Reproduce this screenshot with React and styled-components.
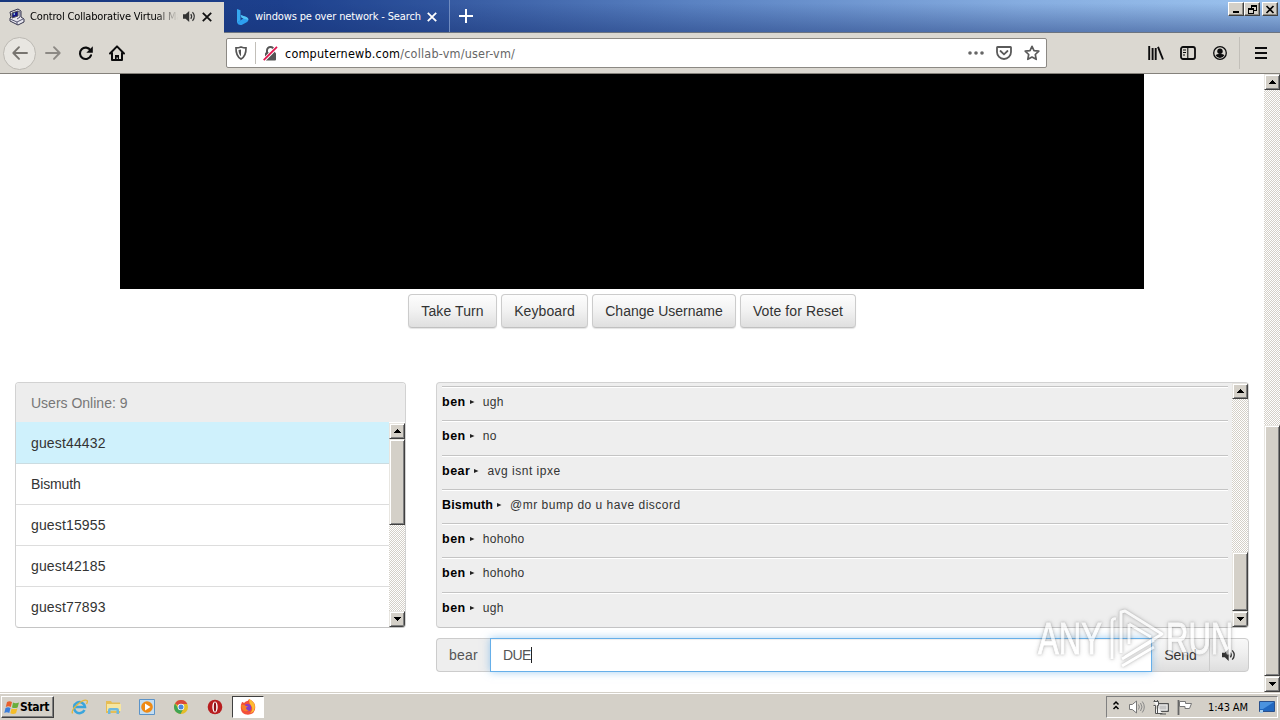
import React from "react";
import styled, { createGlobalStyle, css } from "styled-components";

const Global = createGlobalStyle`
  *{box-sizing:border-box}
  html,body{margin:0;padding:0;overflow:hidden;background:#fff}
  body{font-family:"Liberation Sans",Arial,sans-serif;font-size:14px;color:#333}
`;
const tahoma = css`font-family:"DejaVu Sans Condensed","DejaVu Sans",sans-serif;font-stretch:condensed;`;

const Screen = styled.div`width:1280px;height:720px;display:flex;flex-direction:column;overflow:hidden;position:relative;`;
const TitleBar = styled.header`
  height:33px;flex:none;display:flex;align-items:stretch;
  border-bottom:1px solid #6c7480;
  background:linear-gradient(180deg,rgba(20,45,110,0) 10%,rgba(20,45,110,.42) 100%),linear-gradient(90deg,#17377d 0,#1d3f8b 22%,#5a82c2 54%,#86ade0 80%,#9cc3ee 100%);
`;
const Tab = styled.div`
  width:${p => p.$w}px;flex:none;display:flex;align-items:center;white-space:nowrap;
  ${tahoma} font-size:11px;color:${p => (p.$active ? "#000" : "#fff")};
  ${p => p.$active
    ? "background:#dbd8d1;margin-top:2px;height:32px;padding:0 0 3px 9px;"
    : "padding:2px 0 0 10px;border-right:1px solid #6f8bc0;background:rgba(30,70,150,.2);"}
`;
const TabTitle = styled.span`
  width:${p => p.$w}px;margin-left:${p => p.$ml}px;overflow:hidden;letter-spacing:${p => p.$ls || 0}px;line-height:16px;
  ${p => p.$fade && "-webkit-mask-image:linear-gradient(90deg,#000 85%,transparent 100%);mask-image:linear-gradient(90deg,#000 85%,transparent 100%);"}
`;
const Icon = styled.svg`flex:none;display:block;margin-left:${p => p.$ml || 0}px;margin-top:${p => p.$mt || 0}px;overflow:visible;`;
const WinButtons = styled.div`margin-left:auto;display:flex;padding:2px 2px 0 0;`;
const WinButton = styled.button`
  width:16px;height:14px;padding:0;margin-left:${p => p.$gap || 0}px;background:#d4d0c8;display:flex;align-items:center;justify-content:center;
  border:1px solid;border-color:#fff #404040 #404040 #fff;box-shadow:inset -1px -1px #908d86;
`;
const NavBar = styled.nav`height:41px;flex:none;display:flex;align-items:center;background:#dbd8d1;border-bottom:1px solid #85827c;`;
const BackButton = styled.div`
  width:33px;height:33px;margin-left:3px;border-radius:50%;border:1px solid #bcb9b3;background:#e8e6e1;display:flex;align-items:center;justify-content:center;
`;
const UrlBar = styled.div`
  width:821px;height:30px;margin-left:101px;display:flex;align-items:center;background:#fff;border:1px solid #8c8984;border-radius:2px;
`;
const Divider = styled.i`width:1px;height:${p => p.$h}px;background:#c2bfb9;margin-left:${p => p.$ml}px;`;
const Url = styled.span`${tahoma} font-size:12.5px;color:#666;margin-left:7px;width:675px;white-space:nowrap;letter-spacing:.2px;b{font-weight:400;color:#000;}`;

const Viewport = styled.div`height:618px;flex:none;display:flex;background:#fff;`;
const Page = styled.main`width:1264px;display:flex;flex-direction:column;`;
const Display = styled.div`width:1024px;height:215px;background:#000;margin-left:120px;`;
const Actions = styled.div`display:flex;gap:4px;margin:5px 0 0 408px;height:34px;`;
const Action = styled.button`
  width:${p => p.$w}px;height:34px;padding:0 0 1px;font:14px "Liberation Sans",Arial,sans-serif;letter-spacing:${p => p.$ls || 0}px;color:#333;white-space:nowrap;
  border:1px solid #ccc;border-bottom-color:#c0c0c0;border-radius:4px;background:linear-gradient(#fdfdfd,#f3f3f3 45%,#dfdfdf);box-shadow:0 1px 1px #e4e4e4;
`;
const Columns = styled.div`display:flex;margin:54px 0 0 15px;gap:30px;align-items:flex-start;`;
const Panel = styled.section`
  width:${p => p.$w}px;height:246px;border:1px solid #d2d2d2;border-bottom-color:#c4c4c4;border-radius:4px;overflow:hidden;background:${p => p.$bg || "#fff"};
`;
const PanelHead = styled.div`height:39px;background:#ededed;color:#777;padding-left:15px;line-height:40px;`;
const Split = styled.div`display:flex;height:${p => p.$h}px;`;
const Users = styled.ul`list-style:none;margin:0;padding:0;flex:1;`;
const User = styled.li`
  height:41px;line-height:41px;padding-left:15px;border-bottom:1px solid #ddd;letter-spacing:${p => p.$ls}px;
  ${p => p.$self && "height:42px;line-height:42px;background:#cff1fc;border-color:#cbdce1;"}
`;
const Track = styled.div`
  width:16px;flex:none;display:flex;flex-direction:column;height:${p => (p.$h ? p.$h + "px" : "100%")};margin-top:${p => p.$mt || 0}px;
  background:repeating-conic-gradient(#d4d0c8 0 25%,#fff 0 50%) 0 0/2px 2px;
`;
const Bevel = styled.div`
  width:16px;height:${p => p.$h || 16}px;flex:none;background:#d4d0c8;display:flex;align-items:center;justify-content:center;
  border:1px solid;border-color:#e8e6e1 #404040 #404040 #e8e6e1;box-shadow:inset 1px 1px #fff,inset -1px -1px #808080;
`;
const Gap = styled.div`height:${p => p.$h}px;flex:none;`;
const Messages = styled.div`flex:1;padding:3px 4px 0 5px;`;
const Message = styled.div`
  height:34.25px;border-top:1px solid #c4c4c4;box-shadow:inset 0 1px #fff;padding-top:7px;font-size:12px;line-height:16px;display:flex;white-space:nowrap;
`;
const Nick = styled.b`color:#000;font-size:12.5px;letter-spacing:${p => p.$ls}px;`;
const Said = styled.span`margin-left:8px;letter-spacing:${p => p.$ls}px;`;
const ChatColumn = styled.div`display:flex;flex-direction:column;gap:10px;`;
const InputGroup = styled.div`display:flex;height:34px;width:813px;`;
const Addon = styled.span`
  width:54px;border:1px solid #ccc;border-right:0;border-radius:4px 0 0 4px;background:#eee;color:#555;line-height:32px;padding-left:12px;letter-spacing:.2px;
`;
const Field = styled.div`
  width:662px;border:1px solid #66afe9;background:#fff;color:#555;padding-left:12px;display:flex;align-items:center;position:relative;letter-spacing:-.6px;
  box-shadow:0 0 8px rgba(102,175,233,.6),inset 0 1px 1px rgba(0,0,0,.07);
`;
const Caret = styled.i`width:1px;height:16px;background:#222;`;
const GroupButton = styled.button`
  width:${p => p.$w}px;padding:0;border:1px solid #ccc;border-left:${p => (p.$last ? "1px solid #ccc" : "0")};border-right-width:${p => (p.$last ? 1 : 0)}px;border-radius:${p => (p.$last ? "0 4px 4px 0" : "0")};
  background:linear-gradient(#f8f8f8,#f0f0f0 40%,#dedede);font:14px "Liberation Sans",Arial,sans-serif;color:#333;display:flex;align-items:center;justify-content:center;
`;
const TaskBar = styled.footer`height:28px;flex:none;display:flex;align-items:flex-start;background:#d4d0c8;border-top:1px solid #d4d0c8;box-shadow:inset 0 1px #fff;padding-top:3px;`;
const Start = styled.button`
  width:53px;height:22px;margin-left:1px;padding:0;display:flex;align-items:center;${tahoma} font-size:12px;font-weight:700;letter-spacing:-.35px;color:#000;
  background:#d4d0c8;border:1px solid;border-color:#fff #404040 #404040 #fff;box-shadow:inset -1px -1px #808080;
`;
const Quick = styled.div`display:flex;align-items:center;height:22px;`;
const Running = styled.div`
  width:32px;height:22px;margin-left:9px;background:#fff;display:flex;align-items:center;justify-content:center;border:1px solid;border-color:#404040 #fff #fff #404040;
`;
const Tray = styled.div`width:172px;height:22px;margin:0 2px 0 auto;border:1px solid;border-color:#808080 #fff #fff #808080;display:flex;align-items:center;${tahoma} font-size:11px;color:#000;`;
const Clock = styled.span`width:42px;margin-left:15px;letter-spacing:-.1px;white-space:nowrap;`;
const Watermark = styled.div`
  position:absolute;left:1038px;top:606px;width:196px;height:66px;display:flex;align-items:center;pointer-events:none;opacity:.62;
  font:400 45px "Liberation Sans",Arial,sans-serif;color:#fff;filter:drop-shadow(0 0 1px rgba(90,90,90,.55)) drop-shadow(0 0 2px rgba(110,110,110,.5));
`;
const MarkWord = styled.span`
  width:${p => p.$w}px;flex:none;white-space:nowrap;
  b{display:inline-block;font-weight:400;-webkit-text-stroke:1px #fff;transform-origin:0 50%;transform:scaleX(.69);}
`;

const Arrow = ({ down }) => (
  <Icon width="7" height="4" viewBox="0 0 7 4" shapeRendering="crispEdges"><path d={down ? "M0 0h7L3.5 4z" : "M3.5 0L7 4H0z"} fill="#000" /></Icon>
);
const ScrollBar = ({ h, mt, before, thumb, after }) => (
  <Track $h={h} $mt={mt}>
    <Bevel><Arrow /></Bevel><Gap $h={before} /><Bevel $h={thumb} /><Gap $h={after} /><Bevel><Arrow down /></Bevel>
  </Track>
);
const Cross = ({ color, ml, mt }) => (
  <Icon $ml={ml} $mt={mt} width="10" height="10" viewBox="0 0 10 10"><path d="M.8.8l8.4 8.4M9.2.8L.8 9.2" stroke={color} strokeWidth="1.8" /></Icon>
);
const Speaker = ({ ml, color = "#333", s = 12 }) => (
  <Icon $ml={ml} width={s} height={s} viewBox="0 0 13 13"><path d="M0 4.3h2.6L6.2 1v11L2.6 8.7H0z" fill={color} /><path d="M7.8 4.2q1.7 2.3 0 4.6M9.5 2.2q3.7 4.3 0 8.6" fill="none" stroke={color} strokeWidth="1.2" /></Icon>
);

const users = ["guest44432", "Bismuth", "guest15955", "guest42185", "guest77893"];
const messages = [
  ["ben", "ugh"], ["ben", "no"], ["bear", "avg isnt ipxe"], ["Bismuth", "@mr bump do u have discord"],
  ["ben", "hohoho"], ["ben", "hohoho"], ["ben", "ugh"],
];

export default function App() {
  return (
    <Screen>
      <Global />
      <TitleBar>
        <Tab $w={224} $active>
          <Icon width="16" height="16" viewBox="0 0 16 16">
            <path d="M1 3l8-3 3 2v6l3 2v3l-6 3-8-4V9l1-1z" fill="#e7e6ee" stroke="#34344c" />
            <path d="M3 4l6-2v5L3 9z" fill="#15158a" stroke="#555" /><path d="M4 5l2-1v2z" fill="#aee" /><path d="M1 10l7 3 6-3M8 13v3M9 2l2 1v5l-3 2" fill="none" stroke="#555570" />
          </Icon>
          <TabTitle $w={148} $ml={5} $ls={-0.17} $fade>Control Collaborative Virtual Machine</TabTitle>
          <Speaker ml={5} s={13} /><Cross color="#111" ml={6} />
        </Tab>
        <Tab $w={226}>
          <Icon $ml={2} width="13" height="16" viewBox="0 0 13 16"><path d="M1 0l3.5 1.2v10L1 14z" fill="#36a8f0" /><path d="M1 13.8l3.5-2.5 3-1.7-1.8-.9-1.1-2.8 5.8 2q2.3 1 2 3.2-.2 1.4-1.7 2.2l-5.1 2.6Q2.4 16.5 1 13.8z" fill="#2d9ff0" /><path d="M4.6 5.9l5.8 2q2.3 1 2 3.2L7.5 9.6l-1.8-.9z" fill="#54c5f5" /></Icon>
          <TabTitle $w={169} $ml={6} $ls={-0.15}>windows pe over network - Search</TabTitle>
          <Cross color="#fff" ml={3} />
        </Tab>
        <Icon $ml={9} $mt={9} width="14" height="14" viewBox="0 0 14 14"><path d="M7 0v14M0 7h14" stroke="#fff" strokeWidth="2" /></Icon>
        <WinButtons>
          <WinButton><Icon width="10" height="8" shapeRendering="crispEdges"><path d="M2 6h6v2H2z" /></Icon></WinButton>
          <WinButton><Icon width="9" height="9" viewBox="0 0 9 9" shapeRendering="crispEdges"><path d="M3 0h6v2H3zM8 0h1v6H8zM3 0h1v3H3zM6 5h3v1H6zM0 3h6v2H0zM0 3h1v6H0zM5 3h1v6H5zM0 8h6v1H0z" /></Icon></WinButton>
          <WinButton $gap={2}><Icon width="8" height="7" viewBox="0 0 8 7"><path d="M.5 0l7 7M7.5 0l-7 7" stroke="#000" strokeWidth="1.7" /></Icon></WinButton>
        </WinButtons>
      </TitleBar>
      <NavBar>
        <BackButton><Icon width="16" height="14" viewBox="0 0 16 14"><path d="M15 7H1.5M7 1.2L1.3 7 7 12.8" fill="none" stroke="#77746f" strokeWidth="1.9" strokeLinecap="round" strokeLinejoin="round" /></Icon></BackButton>
        <Icon $ml={9} width="16" height="14" viewBox="0 0 16 14"><path d="M1 7h13.5M9 1.2L14.7 7 9 12.8" fill="none" stroke="#8c8984" strokeWidth="1.9" strokeLinecap="round" strokeLinejoin="round" /></Icon>
        <Icon $ml={17} width="15" height="15" viewBox="0 0 15 15"><path d="M12.5 4.3A5.7 5.7 0 1 0 13 9.3" fill="none" stroke="#0c0c0d" strokeWidth="2.1" strokeLinecap="round" /><path d="M14.8.3v6.5H8.3z" fill="#0c0c0d" /></Icon>
        <Icon $ml={16} width="16" height="16" viewBox="0 0 16 16"><path d="M1 8.500L8 1.400l7 7.100M3 8v7h10V8" fill="none" stroke="#0c0c0d" strokeWidth="2" strokeLinecap="round" strokeLinejoin="round" /><path d="M6 15v-5h4v5H8.800v-2.500H7.600V15z" fill="#0c0c0d" /></Icon>
        <UrlBar>
          <Icon $ml={8} width="12" height="14" viewBox="0 0 12 14"><path d="M6 1q2.500.9 5 .9Q11.200 10 6 13 .8 10 1 1.900q2.500 0 5-.9z" fill="none" stroke="#555" strokeWidth="1.7" /><path d="M6 3.600v6.600Q3.700 8.600 3.500 4z" fill="#555" /></Icon>
          <Divider $h={22} $ml={8} />
          <Icon $ml={7} width="15" height="15" viewBox="0 0 15 15"><path d="M4 7V4.500a3.500 3.500 0 0 1 7 0V7" fill="none" stroke="#555" strokeWidth="2" /><rect x="2" y="6.500" width="11" height="8" rx="1" fill="#555" /><path d="M1 14L14 1" stroke="#fff" strokeWidth="3.5" /><path d="M.7 14.200L14 .8" stroke="#e2164f" strokeWidth="1.8" /></Icon>
          <Url><b>computernewb.com</b>/collab-vm/user-vm/</Url>
          <Icon $ml={8} width="16" height="4" viewBox="0 0 16 4"><g fill="#666"><circle cx="2" cy="2" r="1.8" /><circle cx="8" cy="2" r="1.8" /><circle cx="14" cy="2" r="1.8" /></g></Icon>
          <Icon $ml={12} width="16" height="14" viewBox="0 0 16 14"><path d="M1.500 1h13q.5 0 .5.600V6A7 7 0 0 1 1 6V1.600Q1 1 1.500 1z" fill="none" stroke="#5a5a5a" strokeWidth="1.8" /><path d="M4.500 5L8 8.300 11.500 5" fill="none" stroke="#5a5a5a" strokeWidth="1.8" strokeLinecap="round" /></Icon>
          <Icon $ml={12} width="16" height="16" viewBox="0 0 16 16"><path d="M8 1.300l2 4.300 4.800.6-3.500 3.300.9 4.800L8 12l-4.200 2.300.9-4.800L1.200 6.200 6 5.600z" fill="none" stroke="#5a5a5a" strokeWidth="1.7" strokeLinejoin="round" /></Icon>
        </UrlBar>
        <Icon $ml={101} width="16" height="14" viewBox="0 0 16 14"><path d="M1.200 0v14M4.600 2v12M7.700 2v12M10 .8l5 12.700" stroke="#0c0c0d" strokeWidth="1.9" /></Icon>
        <Icon $ml={16} width="16" height="14" viewBox="0 0 16 14"><rect x="1" y="1" width="14" height="12" rx="2" fill="none" stroke="#0c0c0d" strokeWidth="1.8" /><path d="M7.800 1v12M3 4h3M3 6.500h3M3 9h2" stroke="#0c0c0d" strokeWidth="1.1" /></Icon>
        <Icon $ml={17} width="14" height="14" viewBox="0 0 14 14"><circle cx="7" cy="7" r="6.300" fill="none" stroke="#0c0c0d" strokeWidth="1.3" /><circle cx="7" cy="5.200" r="2.700" fill="#0c0c0d" /><path d="M2.600 9.200Q4 7.800 7 8.100q3-.3 4.400 1.100Q9.800 12 7 12T2.600 9.200z" fill="#0c0c0d" /></Icon>
        <Divider $h={32} $ml={12} />
        <Icon $ml={15} width="12" height="12" viewBox="0 0 12 12"><path d="M0 1h12M0 6h12M0 11h12" stroke="#0c0c0d" strokeWidth="2" /></Icon>
      </NavBar>
      <Viewport>
        <Page>
          <Display />
          <Actions>
            <Action $w={89} $ls={0.1}>Take Turn</Action><Action $w={87} $ls={0.1}>Keyboard</Action><Action $w={144}>Change Username</Action><Action $w={116} $ls={0.1}>Vote for Reset</Action>
          </Actions>
          <Columns>
            <Panel $w={391}>
              <PanelHead>Users Online: 9</PanelHead>
              <Split $h={205}>
                <Users>{users.map((u, i) => <User key={u} $self={i === 0} $ls={i === 1 ? -0.15 : 0.15}>{u}</User>)}</Users>
                <ScrollBar h={204} mt={1} before={0} thumb={86} after={86} />
              </Split>
            </Panel>
            <ChatColumn>
              <Panel $w={813} $bg="#eee">
                <Split $h={244}>
                  <Messages>
                    {messages.map(([n, t], i) => (
                      <Message key={i}>
                        <Nick $ls={n.length > 4 ? 0.15 : 0.5}>{n}</Nick>
                        <Icon $ml={4} $mt={5} width="5" height="6" viewBox="0 0 5 6"><path d="M0 1l4.500 2L0 5z" fill="#222" /></Icon>
                        <Said $ls={t.length > 8 ? 0.5 : 0.3}>{t}</Said>
                      </Message>
                    ))}
                  </Messages>
                  <ScrollBar before={153} thumb={59} after={0} />
                </Split>
              </Panel>
              <InputGroup>
                <Addon>bear</Addon><Field>DUE<Caret /></Field><GroupButton $w={57}>Send</GroupButton>
                <GroupButton $w={40} $last><Speaker s={14} /></GroupButton>
              </InputGroup>
            </ChatColumn>
          </Columns>
        </Page>
        <ScrollBar before={335} thumb={251} after={0} />
      </Viewport>
      <TaskBar>
        <Start>
          <Icon $ml={2} width="16" height="15" viewBox="0 0 16 15"><path d="M3 2q2.500-1.500 5 0L6.800 7q-2.500-1.500-5 0z" fill="#e8602c" /><path d="M9 2.500q2.500 1.400 6 0L13.600 7.400q-3 1.400-5.600 0z" fill="#69ae3c" /><path d="M1.500 8q2.500-1.500 5 0L5.300 13q-2.500-1.500-5 0z" fill="#3a7edb" /><path d="M7.600 8.400q2.500 1.400 5.800 0L12 13.200q-3 1.400-5.700 0z" fill="#f5bd28" /></Icon>Start
        </Start>
        <Quick>
          <Icon $ml={17} width="17" height="16" viewBox="0 0 17 16"><path d="M13.500 11A5.500 5.500 0 1 1 14 8H4.500" fill="none" stroke="#3aa5dc" strokeWidth="2.5" /><path d="M1.500 14.500Q0 11 6.500 5.500T16 1.500q1 1-.5 3.500" fill="none" stroke="#e5b83c" strokeWidth="1.3" /></Icon>
          <Icon $ml={17} width="17" height="16" viewBox="0 0 17 16"><path d="M1 2h5l1 1.500h8V14H1z" fill="#e6bd55" /><path d="M2 5h14v7H2z" fill="#f7e6a0" /><path d="M3 15v-4q0-2 2-2h7q2 0 2 2v4h-2.500v-3.500H5.500V15z" fill="#6db8df" /></Icon>
          <Icon $ml={17} width="16" height="16" viewBox="0 0 16 16"><path d="M.5.5h15v15H.5z" fill="#c3ddf2" stroke="#5b93c8" /><circle cx="8" cy="8" r="5.800" fill="#ef8a14" /><path d="M6 4.500L11.500 8 6 11.500z" fill="#fff" /></Icon>
          <Icon $ml={18} width="16" height="16" viewBox="0 0 16 16"><circle cx="8" cy="8" r="7" fill="#e5bd28" /><path d="M8 8L2 4.400A7 7 0 0 1 14.300 5H8z" fill="#d9483b" /><path d="M2 4.400A7 7 0 0 0 7.500 15l3-5.500L5 9z" fill="#3fa454" /><circle cx="8" cy="8" r="3.300" fill="#fff" /><circle cx="8" cy="8" r="2.500" fill="#4a86dc" /></Icon>
          <Icon $ml={18} width="16" height="16" viewBox="0 0 16 16"><circle cx="8" cy="8" r="7.300" fill="#b81d1f" /><ellipse cx="8" cy="8" rx="2.700" ry="5.500" fill="#fff" /><ellipse cx="8" cy="8" rx="1.200" ry="4.700" fill="#8e1015" /></Icon>
        </Quick>
        <Running><Icon width="16" height="16" viewBox="0 0 16 16"><path d="M2 3q1 0 2 1 1.500-2 4-2.200L9 0q5 2.500 6 6 1.500 9-7 9.700Q1 15.500.8 9 .7 5.500 2 3z" fill="#f4503a" /><path d="M9 0q5 2.500 5.800 6.500.8 6-4.800 8Q14 10 11 6.500 8.800 4 9 0z" fill="#fdbd32" /><circle cx="7.500" cy="8.700" r="3.600" fill="#8440c8" /><path d="M1 6q3-1 5 1l2 .2-2 1.500Q6 11 9 11q-4 3-7-1z" fill="#f98027" /></Icon></Running>
        <Tray>
          <Icon $ml={6} $mt={-4} width="6" height="9" viewBox="0 0 6 9"><path d="M.5 3.500L3 1l2.500 2.500M.5 8L3 5.500 5.500 8" fill="none" stroke="#000" strokeWidth="1.5" /></Icon>
          <Icon $ml={10} width="16" height="16" viewBox="0 0 16 16"><path d="M.5 5.500h2.800L7.500 2v12L3.300 10.500H.5z" fill="#fff" stroke="#777" /><path d="M9.500 5.500q1.700 2.500 0 5M11.500 4q3 4 0 8M13.300 2.500q4 5.500 0 11" fill="none" stroke="#888" /></Icon>
          <Icon $ml={8} width="16" height="15" viewBox="0 0 16 15"><path d="M4.500 3.500h11v8h-11zM7 14h6" fill="#aaa" stroke="#555" /><path d="M6 5h8v5H6z" fill="#c6c6c6" stroke="#eee" /><path d="M.5 1.500h5v4h-1v8h5M1.500 0v2M4.500 0v2M.5 5.500h2v8h5" fill="#f4f4f4" stroke="#555" /></Icon>
          <Icon $ml={8} width="16" height="15" viewBox="0 0 16 15"><path d="M1.500 0v15" stroke="#666" strokeWidth="1.8" /><path d="M2.500 1.500h6v2h6l-2 5H8v-2H2.500z" fill="#fff" stroke="#777" /></Icon>
          <Clock>1:43 AM</Clock>
          <Icon $ml={9} width="16" height="13" viewBox="0 0 16 13"><path d="M.5.5h15v10H.5z" fill="#2168c0" stroke="#29508c" /><path d="M1 1h14L4 8H1z" fill="#4b93df" /><path d="M1 9h3v3H1z" fill="#a8cfee" /></Icon>
        </Tray>
      </TaskBar>
      <Watermark>
        <MarkWord $w={70}><b>ANY</b></MarkWord>
        <Icon width="58" height="64" viewBox="0 0 58 64"><path d="M4 52V15q0-4 4-3M13 46V5l4-1 37 23-37 23M21 17v20M21 17l22 13M14 52l32-19M14 59l32-19" fill="none" stroke="#fff" strokeWidth="3" strokeLinejoin="round" /></Icon>
        <MarkWord $w={68}><b>RUN</b></MarkWord>
      </Watermark>
    </Screen>
  );
}
